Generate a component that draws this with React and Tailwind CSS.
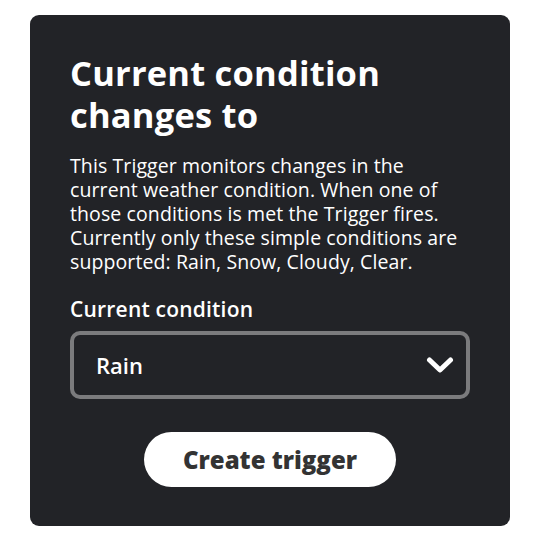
export default function App() {
  return (
    <div className="w-[557px] h-[552px] bg-white pt-[15px] pl-[30px]" style={{ fontFamily: "'Open Sans', 'Noto Sans', sans-serif" }}>
      <div className="w-[480px] h-[511px] bg-[#222327] rounded-[9px] px-[40px] pt-[37px] flex flex-col">
        <h1 className="text-white font-bold text-[34.5px] leading-[42px] tracking-[0.2px]">
          Current condition<br />changes to
        </h1>
        <p className="mt-[18px] text-white text-[19.5px] leading-[24px] tracking-[0.1px] whitespace-nowrap">
          This Trigger monitors changes in the<br />
          current weather condition. When one of<br />
          those conditions is met the Trigger fires.<br />
          Currently only these simple conditions are<br />
          supported: Rain, Snow, Cloudy, Clear.
        </p>
        <div className="mt-[23px] text-white font-semibold text-[21px] leading-[24px] tracking-[0.2px]">Current condition</div>
        <div className="mt-[10px] w-[400px] h-[68px] border-[4px] border-[#7b7b7d] rounded-[10px] flex items-center justify-between pl-[22px] pr-[12px]">
          <span className="text-white font-semibold text-[22px]">Rain</span>
          <svg width="28" height="20" viewBox="0 0 28 20">
            <path d="M3.5 5 L14 15 L24.5 5" fill="none" stroke="white" strokeWidth="5" strokeLinecap="round" strokeLinejoin="round" />
          </svg>
        </div>
        <div className="flex justify-center mt-[33px]">
          <button className="w-[252px] h-[55px] rounded-full bg-white text-[#333333] font-extrabold text-[24px]">
            Create trigger
          </button>
        </div>
      </div>
    </div>
  );
}
